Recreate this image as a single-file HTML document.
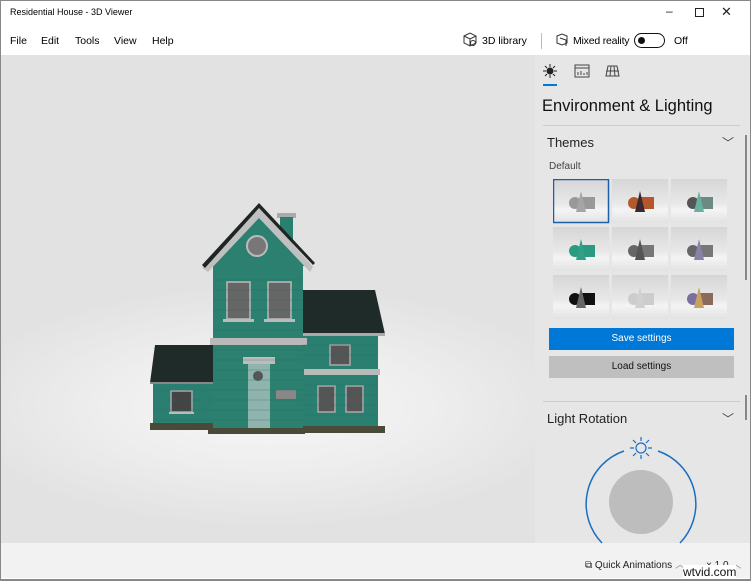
<!DOCTYPE html>
<html><head><style>
*{margin:0;padding:0;box-sizing:border-box}
body{width:751px;height:581px;overflow:hidden;background:#fff;font-family:"Liberation Sans",sans-serif;color:#000;position:relative}
.a{position:absolute}
.menu span{position:absolute;top:35px;font-size:10.5px}
</style></head><body>
<div class="a" style="left:0;top:0;width:751px;height:581px;border:1px solid #888;border-bottom-width:2px"></div>
<div class="a" style="left:10px;top:7px;font-size:9px">Residential House - 3D Viewer</div>
<div class="a" style="left:666px;top:4px;font-size:12px;color:#222">–</div>
<div class="a" style="left:695px;top:8px;width:9px;height:9px;border:1px solid #222"></div>
<div class="a" style="left:721px;top:4px;font-size:13px;color:#222">✕</div>
<div class="menu">
<span style="left:10px">File</span><span style="left:41px">Edit</span><span style="left:75px">Tools</span><span style="left:114px">View</span><span style="left:152px">Help</span>
<span style="left:482px">3D library</span><span style="left:573px;letter-spacing:-0.2px">Mixed reality</span><span style="left:674px">Off</span>
</div>
<svg class="a" style="left:462px;top:32px" width="16" height="16" viewBox="0 0 16 16" fill="none" stroke="#333" stroke-width="1"><path d="M2 4l6-3 6 3v7l-6 3-6-3z M2 4l6 3 6-3 M8 7v7"/><circle cx="11" cy="11" r="2.5"/></svg>
<div class="a" style="left:541px;top:33px;width:1px;height:16px;background:#bbb"></div>
<svg class="a" style="left:555px;top:32px" width="16" height="16" viewBox="0 0 16 16" fill="none" stroke="#333"><path d="M2 4l5-2 5 2v7l-5 2-5-2z M5 6l6 2v6"/></svg>
<div class="a" style="left:634px;top:33px;width:31px;height:15px;border:1.5px solid #111;border-radius:8px;background:#fff"><div class="a" style="left:3px;top:2.5px;width:7px;height:7px;border-radius:50%;background:#111"></div></div>

<div class="a" style="left:1px;top:55px;width:534px;height:488px;background:radial-gradient(ellipse 60% 25% at 50% 72%,#f7f7f7 0%,#eeeeee 50%,#e2e2e2 100%),#e4e4e4"></div>
<div class="a" style="left:1px;top:543px;width:749px;height:35px;background:#f2f2f2"></div>

<svg class="a" style="left:145px;top:195px" width="245" height="245" viewBox="145 195 245 245">
<rect x="153" y="380" width="62" height="45" fill="#2b7f70"/>
<polygon points="155,345 213,345 213,383 150,383" fill="#1f2b28"/>
<rect x="150" y="382" width="64" height="2" fill="#888"/>
<rect x="171" y="391" width="21" height="21" fill="#444" stroke="#aaa" stroke-width="1.5"/>
<rect x="169" y="412" width="25" height="2" fill="#bbb"/>
<rect x="150" y="423" width="65" height="7" fill="#4a4a38"/>
<rect x="303" y="335" width="75" height="93" fill="#2b7f70"/>
<polygon points="303,290 375,290 385,334 303,334" fill="#1f2b28"/>
<rect x="303" y="333" width="82" height="3" fill="#aaa"/>
<rect x="304" y="369" width="76" height="6" fill="#b9b9b9"/>
<rect x="330" y="345" width="20" height="20" fill="#555" stroke="#aaa" stroke-width="1.5"/>
<rect x="318" y="386" width="17" height="26" fill="#555" stroke="#aaa" stroke-width="1.5"/>
<rect x="346" y="386" width="17" height="26" fill="#555" stroke="#aaa" stroke-width="1.5"/>
<rect x="303" y="426" width="82" height="7" fill="#4a4a38"/>
<rect x="277" y="213" width="19" height="5" fill="#aaa"/>
<rect x="280" y="217" width="13" height="28" fill="#2b7f70"/>
<rect x="213" y="262" width="90" height="170" fill="#2b8070"/>
<polygon points="259,215 212,266 306,266" fill="#2b8070"/>
<polygon points="259,205 202,268 208,272 259,218 310,272 313,267" fill="#c0c0c0"/>
<polygon points="259,203 202,265 205,268 259,208 313,265 315,263" fill="#1e2523"/>
<circle cx="257" cy="246" r="10" fill="#777" stroke="#bbb" stroke-width="2"/>
<rect x="227" y="282" width="23" height="37" fill="#666" stroke="#bbb" stroke-width="1.5"/>
<rect x="268" y="282" width="23" height="37" fill="#666" stroke="#bbb" stroke-width="1.5"/>
<rect x="223" y="319" width="31" height="3" fill="#bbb"/>
<rect x="264" y="319" width="31" height="3" fill="#bbb"/>
<rect x="210" y="338" width="97" height="7" fill="#b9b9b9"/>
<rect x="243" y="357" width="32" height="7" fill="#bcbcbc"/>
<rect x="248" y="364" width="22" height="68" fill="#8fb3ad"/>
<circle cx="258" cy="376" r="5" fill="#555"/>
<rect x="276" y="390" width="20" height="9" fill="#888"/>
<rect x="208" y="428" width="97" height="6" fill="#4a4a38"/>
<g stroke="#226b5e" stroke-width="0.6" opacity="0.6">
<path d="M213 280h90M213 290h90M213 300h90M213 310h90M213 330h90M213 350h90M213 360h90M213 370h90M213 380h90M213 390h90M213 400h90M213 410h90M213 420h90M303 345h75M303 355h75M303 385h75M303 395h75M303 405h75M303 415h75M153 390h60M153 400h60M153 410h60M153 420h60"/>
</g>
</svg>

<div class="a" style="left:535px;top:55px;width:215px;height:488px;background:#e6e6e6"></div>
<svg class="a" style="left:542px;top:63px" width="16" height="16" viewBox="0 0 16 16" stroke="#222" fill="none"><circle cx="8" cy="8" r="3" fill="#222"/><path d="M8 1v3M8 12v3M1 8h3M12 8h3M3 3l2 2M11 11l2 2M13 3l-2 2M5 11l-2 2"/></svg>
<div class="a" style="left:543px;top:84px;width:14px;height:2px;background:#0078d7"></div>
<svg class="a" style="left:574px;top:64px" width="16" height="14" viewBox="0 0 16 14" stroke="#444" fill="none"><rect x="1" y="1" width="14" height="12"/><path d="M1 4h14M4 11v-3M7 11v-4M10 11v-2M13 11v-3"/></svg>
<svg class="a" style="left:605px;top:64px" width="15" height="14" viewBox="0 0 15 14" stroke="#444" fill="none"><path d="M3 2h9l2 10H1z M1 7h13M6 2l-1 10M9 2l1 10"/></svg>
<div class="a" style="left:542px;top:97px;font-size:16.5px;color:#111">Environment &amp; Lighting</div>
<div class="a" style="left:543px;top:125px;width:197px;height:1px;background:#ccc"></div>
<div class="a" style="left:745px;top:135px;width:2px;height:145px;background:#888"></div>
<div class="a" style="left:547px;top:135px;font-size:13px;color:#222">Themes</div>
<div class="a" style="left:722px;top:134px;font-size:12px;color:#444">﹀</div>
<div class="a" style="left:549px;top:161px;font-size:10px;color:#444">Default</div>
<div class="a" style="left:553px;top:179px;width:174px;height:141px">
<svg width="174" height="141" viewBox="0 0 174 141">
<defs><linearGradient id="g" x1="0" y1="0" x2="0" y2="1"><stop offset="0" stop-color="#d6d6d6"/><stop offset="0.55" stop-color="#e8e8e8"/><stop offset="0.7" stop-color="#f4f4f4"/><stop offset="1" stop-color="#e2e2e2"/></linearGradient></defs>
<g id="t"><rect x="0" y="0" width="56" height="44" fill="url(#g)"/></g>
<use href="#t" x="59"/><use href="#t" x="118"/><use href="#t" y="48"/><use href="#t" x="59" y="48"/><use href="#t" x="118" y="48"/><use href="#t" y="96"/><use href="#t" x="59" y="96"/><use href="#t" x="118" y="96"/>
<rect x="0.5" y="0.5" width="55" height="43" fill="none" stroke="#1a5fa8" stroke-width="1.5"/>
<g>
<circle cx="22" cy="24" r="6" fill="#999"/><rect x="29" y="18" width="13" height="12" fill="#999"/><polygon points="28,12 23,33 33,33" fill="#a5a5a5"/>
<circle cx="81" cy="24" r="6" fill="#b25a2c"/><rect x="88" y="18" width="13" height="12" fill="#b5562c"/><polygon points="87,12 82,33 92,33" fill="#3a2a30"/>
<circle cx="140" cy="24" r="6" fill="#555"/><rect x="147" y="18" width="13" height="12" fill="#6b8a84"/><polygon points="146,12 141,33 151,33" fill="#6ab0a0"/>
<circle cx="22" cy="72" r="6" fill="#2a9a80"/><rect x="29" y="66" width="13" height="12" fill="#2a9a80"/><polygon points="28,60 23,81 33,81" fill="#30a088"/>
<circle cx="81" cy="72" r="6" fill="#666"/><rect x="88" y="66" width="13" height="12" fill="#777"/><polygon points="87,60 82,81 92,81" fill="#555"/>
<circle cx="140" cy="72" r="6" fill="#666"/><rect x="147" y="66" width="13" height="12" fill="#777"/><polygon points="146,60 141,81 151,81" fill="#8a80a8"/>
<circle cx="22" cy="120" r="6" fill="#111"/><rect x="29" y="114" width="13" height="12" fill="#111"/><polygon points="28,108 23,129 33,129" fill="#666"/>
<circle cx="81" cy="120" r="6" fill="#ccc"/><rect x="88" y="114" width="13" height="12" fill="#ccc"/><polygon points="87,108 82,129 92,129" fill="#d0d0d0"/>
<circle cx="140" cy="120" r="6" fill="#7a70a0"/><rect x="147" y="114" width="13" height="12" fill="#8a6a58"/><polygon points="146,108 141,129 151,129" fill="#c8a060"/>
</g>
</svg></div>
<div class="a" style="left:549px;top:328px;width:185px;height:22px;background:#0078d7;color:#fff;font-size:10px;text-align:center;line-height:22px">Save settings</div>
<div class="a" style="left:549px;top:356px;width:185px;height:22px;background:#bfbfbf;color:#111;font-size:10px;text-align:center;line-height:22px">Load settings</div>
<div class="a" style="left:543px;top:401px;width:197px;height:1px;background:#ccc"></div>
<div class="a" style="left:745px;top:395px;width:2px;height:25px;background:#888"></div>
<div class="a" style="left:547px;top:411px;font-size:13px;color:#222">Light Rotation</div>
<div class="a" style="left:722px;top:410px;font-size:12px;color:#444">﹀</div>
<svg class="a" style="left:580px;top:435px" width="125" height="110" viewBox="0 0 125 110">
<path d="M 44 16 A 56 56 0 0 0 22 108" fill="none" stroke="#1a6fc0" stroke-width="1.5"/>
<path d="M 78 16 A 56 56 0 0 1 100 108" fill="none" stroke="#1a6fc0" stroke-width="1.5"/>
<circle cx="61" cy="67" r="32" fill="#bdbdbd"/>
<g stroke="#1a6fc0" fill="none" stroke-width="1.2"><circle cx="61" cy="13" r="5"/><path d="M61 2v4M61 20v4M50 13h4M68 13h4M53 5l3 3M66 18l3 3M69 5l-3 3M56 18l-3 3"/></g>
</svg>
<div class="a" style="left:585px;top:556px;font-size:10px;color:#222">⧉ Quick Animations <span style="color:#888">︿</span></div>
<div class="a" style="left:706px;top:556px;font-size:10px;color:#222">× 1.0 <span style="color:#888">︿</span></div>
<div class="a" style="left:683px;top:565px;font-size:12px;color:#111;background:#fff">wtvid.com</div>
</body></html>
